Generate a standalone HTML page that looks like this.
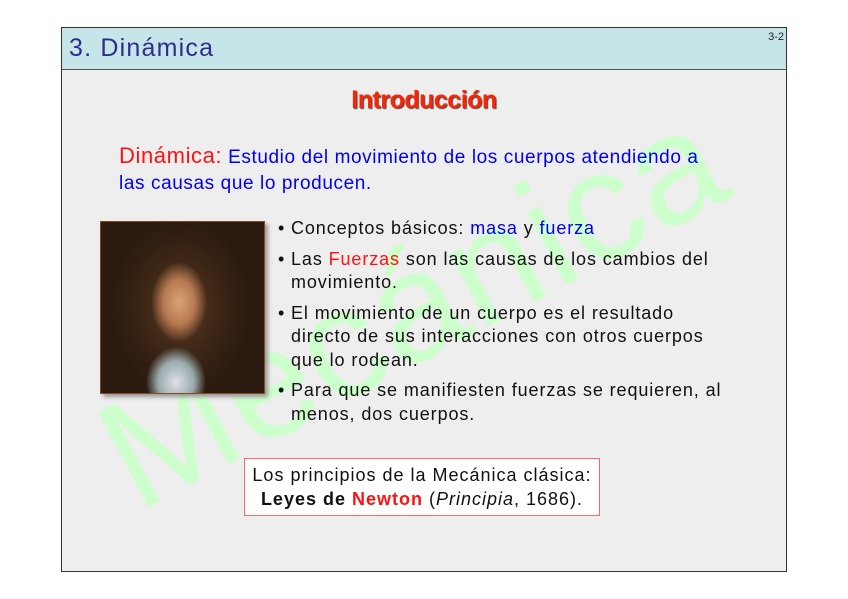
<!DOCTYPE html>
<html><head><meta charset="utf-8"><style>
body{margin:0;width:848px;height:599px;background:#fff;position:relative;overflow:hidden;font-family:"Liberation Sans",sans-serif}
.slide{position:absolute;left:61px;top:27px;width:724px;height:543px;border:1px solid #333;background:#eeeeee;overflow:hidden}
.hdr{position:absolute;left:0;top:0;width:724px;height:41px;background:#c6e5e8;border-bottom:1px solid #555;z-index:2}
.hdr .t{position:absolute;left:7px;top:6px;font-size:25px;color:#2d2d8a;letter-spacing:1.2px}
.hdr .n{position:absolute;right:2px;top:3px;font-size:11px;color:#222}
.wm{position:absolute;left:50px;top:360px;font-size:155px;line-height:155px;color:#ccffcc;transform:rotate(-28deg);transform-origin:left center;white-space:nowrap;letter-spacing:2px}
.intro{position:absolute;left:0;width:724px;top:58px;text-align:center;font-size:25px;font-weight:bold;color:#ff2200;text-shadow:1px 1px 1px #444;letter-spacing:-0.5px}
.def{position:absolute;left:57px;top:115px;white-space:nowrap;font-size:19px;color:#0000ee;line-height:26px;letter-spacing:0.6px}
.def .r{color:#ff1111;font-size:22px}
.img{position:absolute;left:38px;top:193px;width:163px;height:171px;border:1px solid #8a4a20;box-shadow:3px 3px 4px #999;
background:radial-gradient(ellipse 28px 40px at 78px 80px,#d9a276 0%,#b77a52 55%,transparent 100%),
radial-gradient(ellipse 30px 35px at 75px 160px,#dfe0e8 0%,#9aa 60%,transparent 100%),
radial-gradient(ellipse 70px 90px at 80px 85px,#5a3a22 0%,#3a2414 60%,#2a1a10 100%)}
ul{position:absolute;left:216px;top:189px;margin:0;padding:0;list-style:none;font-size:18px;line-height:23.5px;color:#111;white-space:nowrap;letter-spacing:0.9px}
li{position:relative;padding-left:13px;margin-bottom:7px}
li:before{content:"•";position:absolute;left:0}
.b{color:#0000ee}.rd{color:#ff1111}
.box{position:absolute;left:182px;top:430px;width:356px;height:58px;border:1px solid #f66;background:#fff;text-align:center;font-size:18px;line-height:24px;padding-top:4px;box-sizing:border-box;color:#111;letter-spacing:1px;white-space:nowrap}
</style></head><body>
<div class="slide">
<div class="wm">Mecánica</div>
<div class="hdr"><div class="t">3. Dinámica</div><div class="n">3-2</div></div>
<div class="intro">Introducción</div>
<div class="def"><span class="r">Dinámica:</span> Estudio del movimiento de los cuerpos atendiendo a<br>las causas que lo producen.</div>
<div class="img"></div>
<ul>
<li>Conceptos básicos: <span class="b">masa</span> y <span class="b">fuerza</span></li>
<li>Las <span class="rd">Fuerzas</span> son las causas de los cambios del<br>movimiento.</li>
<li>El movimiento de un cuerpo es el resultado<br>directo de sus interacciones con otros cuerpos<br>que lo rodean.</li>
<li>Para que se manifiesten fuerzas se requieren, al<br>menos, dos cuerpos.</li>
</ul>
<div class="box">Los principios de la Mecánica clásica:<br><b>Leyes de <span class="rd">Newton</span></b> (<i>Principia</i>, 1686).</div>
</div>
</body></html>
